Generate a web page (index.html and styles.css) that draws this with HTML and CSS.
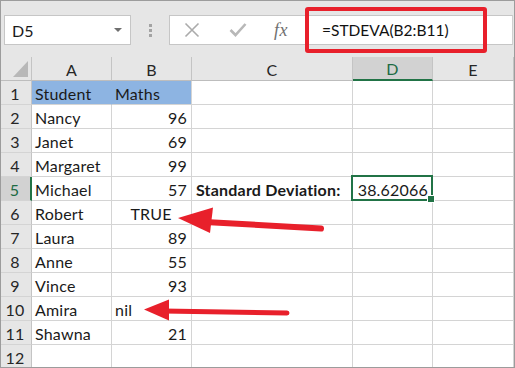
FILE: index.html
```html
<!DOCTYPE html>
<html lang="en">
<head>
  <meta charset="UTF-8">
  <title>STDEVA - Sheet</title>
  <link rel="stylesheet" href="styles.css">
</head>
<body>
  <div class="window">
    <div class="toolbar">
      <div class="namebox">
        <span>D5</span>
        <span class="caret"></span>
      </div>
      <div class="grip"><i></i><i></i><i></i></div>
      <div class="formula">
        <svg class="ico" width="16" height="16" viewBox="0 0 16 16">
          <path d="M1.5 1.5 L14.5 14.5 M14.5 1.5 L1.5 14.5" stroke="#ababab" stroke-width="1.6" fill="none"/>
        </svg>
        <svg class="ico ok" width="18" height="16" viewBox="0 0 18 16">
          <path d="M1.5 8 L6.5 13 L16.5 2" stroke="#b8b8b8" stroke-width="2.6" fill="none"/>
        </svg>
        <span class="fx">fx</span>
        <span class="expr">=STDEVA(B2:B11)</span>
      </div>
      <div class="highlight"></div>
    </div>

    <div class="sheet">
      <div class="corner"><span class="tri"></span></div>
      <div class="colhead">A</div>
      <div class="colhead">B</div>
      <div class="colhead">C</div>
      <div class="colhead sel">D</div>
      <div class="colhead">E</div>

      <div class="rowhead">1</div>
      <div class="cell title join">Student</div>
      <div class="cell title">Maths</div>
      <div class="cell"></div><div class="cell"></div><div class="cell"></div>

      <div class="rowhead">2</div>
      <div class="cell">Nancy</div><div class="cell num">96</div>
      <div class="cell"></div><div class="cell"></div><div class="cell"></div>

      <div class="rowhead">3</div>
      <div class="cell">Janet</div><div class="cell num">69</div>
      <div class="cell"></div><div class="cell"></div><div class="cell"></div>

      <div class="rowhead">4</div>
      <div class="cell">Margaret</div><div class="cell num">99</div>
      <div class="cell"></div><div class="cell"></div><div class="cell"></div>

      <div class="rowhead sel">5</div>
      <div class="cell">Michael</div><div class="cell num">57</div>
      <div class="cell bold">Standard Deviation:</div>
      <div class="cell num active">38.62066</div>
      <div class="cell"></div>

      <div class="rowhead">6</div>
      <div class="cell">Robert</div><div class="cell mid">TRUE</div>
      <div class="cell"></div><div class="cell"></div><div class="cell"></div>

      <div class="rowhead">7</div>
      <div class="cell">Laura</div><div class="cell num">89</div>
      <div class="cell"></div><div class="cell"></div><div class="cell"></div>

      <div class="rowhead">8</div>
      <div class="cell">Anne</div><div class="cell num">55</div>
      <div class="cell"></div><div class="cell"></div><div class="cell"></div>

      <div class="rowhead">9</div>
      <div class="cell">Vince</div><div class="cell num">93</div>
      <div class="cell"></div><div class="cell"></div><div class="cell"></div>

      <div class="rowhead">10</div>
      <div class="cell">Amira</div><div class="cell">nil</div>
      <div class="cell"></div><div class="cell"></div><div class="cell"></div>

      <div class="rowhead">11</div>
      <div class="cell">Shawna</div><div class="cell num">21</div>
      <div class="cell"></div><div class="cell"></div><div class="cell"></div>

      <div class="rowhead">12</div>
      <div class="cell"></div><div class="cell"></div>
      <div class="cell"></div><div class="cell"></div><div class="cell"></div>
    </div>

    <svg class="arrows" width="515" height="368" viewBox="0 0 515 368">
      <line x1="205" y1="222" x2="321" y2="228.5" stroke="#e8202b" stroke-width="6" stroke-linecap="round"/>
      <polygon points="178,218 213,207.5 210,233" fill="#e8202b"/>
      <line x1="163" y1="311" x2="287" y2="313" stroke="#e8202b" stroke-width="5" stroke-linecap="round"/>
      <polygon points="144,309.5 169,299.5 169,320.5" fill="#e8202b"/>
    </svg>
  </div>
</body>
</html>
```

FILE: styles.css
```css
* { box-sizing: border-box; margin: 0; padding: 0; }
body {
  font-family: 'Lato', 'Liberation Sans', sans-serif;
  background: #ffffff;
  color: #1a1a1a;
}
.window {
  position: relative;
  width: 515px;
  height: 368px;
  border: 1px solid #9c9c9c;
  background: #e6e6e6;
  overflow: hidden;
}

/* formula bar */
.toolbar {
  height: 56px;
  display: flex;
  align-items: flex-start;
  padding: 14px 0 0 3px;
}
.namebox {
  width: 127px;
  height: 30px;
  background: white;
  border: 1px solid #c6c6c6;
  display: flex;
  align-items: center;
  justify-content: space-between;
  padding: 0 8px 0 7px;
  font-size: 16px;
}
.caret {
  width: 0;
  height: 0;
  border-left: 4px solid transparent;
  border-right: 4px solid transparent;
  border-top: 4px solid #6f6f6f;
}
.grip {
  width: 38px;
  height: 30px;
  display: flex;
  flex-direction: column;
  align-items: center;
  justify-content: center;
  gap: 2px;
}
.grip i {
  display: block;
  width: 3px;
  height: 3px;
  background: #a3a3a3;
}
.formula {
  flex: 1;
  height: 30px;
  background: white;
  border: 1px solid #c6c6c6;
  border-right: 1px solid #d0d0d0;
  margin-right: 1px;
  display: flex;
  align-items: center;
  padding-left: 14px;
}
.ico { flex-shrink: 0; }
.ok { margin-left: 29px; }
.fx {
  font-family: 'Liberation Serif', serif;
  font-style: italic;
  font-size: 18px;
  color: #707070;
  margin-left: 27px;
  letter-spacing: 0.5px;
}
.expr {
  font-size: 15.5px;
  margin-left: 34px;
  color: #111;
}
.highlight {
  position: absolute;
  left: 304px;
  top: 6px;
  width: 182px;
  height: 46px;
  border: 4px solid #e8202b;
  border-radius: 3px;
}

/* grid */
.sheet {
  display: grid;
  grid-template-columns: 31px 80px 80px 161px 80px 81px;
  grid-auto-rows: 24px;
  font-size: 16px;
  letter-spacing: 0.2px;
}
.corner, .colhead {
  border-right: 1px solid #c4c4c4;
  border-bottom: 1px solid #bdbdbd;
}
.corner {
  position: relative;
}
.tri {
  position: absolute;
  right: 3px;
  bottom: 3px;
  width: 0;
  height: 0;
  border-left: 15px solid transparent;
  border-bottom: 16px solid #b8b8b8;
}
.colhead {
  display: flex;
  align-items: flex-end;
  justify-content: center;
  line-height: 20px;
  color: #262626;
}
.colhead.sel {
  background: #d2d2d2;
  color: #1d6b44;
  border-bottom: 2px solid #217346;
}
.rowhead {
  border-right: 1px solid #c4c4c4;
  border-bottom: 1px solid #d4d4d4;
  display: flex;
  align-items: flex-end;
  justify-content: center;
  padding-right: 2px;
  line-height: 21px;
  color: #262626;
}
.rowhead.sel {
  background: #d2d2d2;
  color: #1d6b44;
  border-right: 2px solid #217346;
}
.cell {
  background: white;
  border-right: 1px solid #d4d4d4;
  border-bottom: 1px solid #d4d4d4;
  display: flex;
  align-items: flex-end;
  line-height: 21px;
  padding: 0 4px 0 3px;
  white-space: nowrap;
}
.cell.num { justify-content: flex-end; }
.cell.mid { justify-content: center; }
.cell.bold { font-weight: bold; padding-left: 4px; }
.cell.title { background: #8db4e2; }
.cell.join { border-right-color: #8db4e2; }
.cell.active { position: relative; }
.cell.active::after {
  content: "";
  position: absolute;
  left: -2px;
  top: -2px;
  right: -1px;
  bottom: -1px;
  border: 2px solid #217346;
}
.cell.active::before {
  content: "";
  position: absolute;
  right: -3px;
  bottom: -3px;
  width: 6px;
  height: 6px;
  background: #217346;
  border: 1px solid white;
  z-index: 1;
}

.arrows {
  position: absolute;
  left: -1px;
  top: -1px;
}
```
